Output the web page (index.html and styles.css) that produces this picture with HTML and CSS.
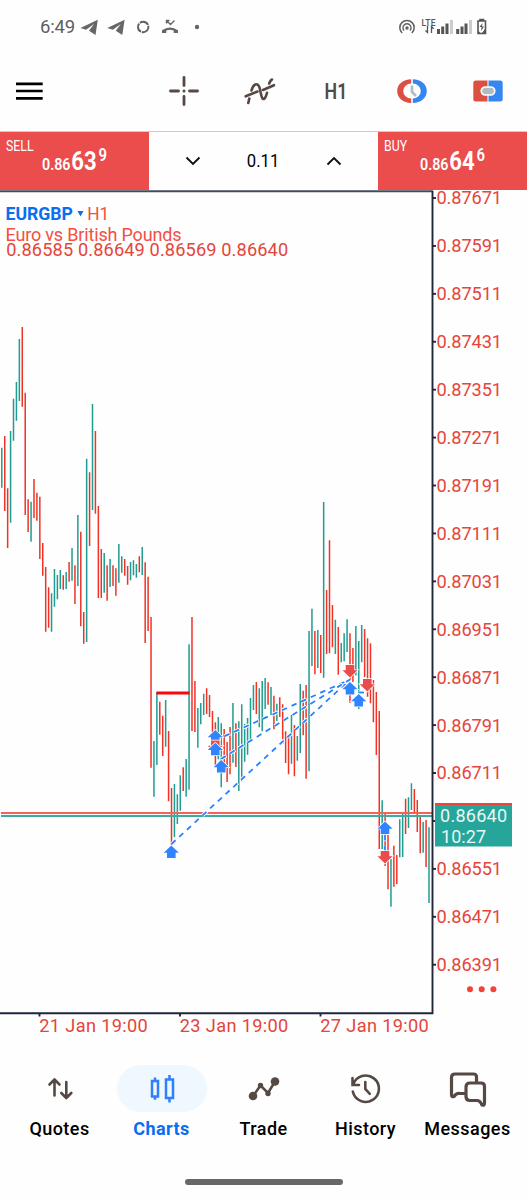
FILE: index.html
```html
<!DOCTYPE html>
<html lang="en">
<head>
    <meta charset="UTF-8">
    <meta name="viewport" content="width=device-width, initial-scale=1.0">
    <title>EURGBP H1</title>
    <link rel="stylesheet" href="styles.css">
</head>
<body>
    <div class="app">
        <!-- Status bar -->
        <div class="status-bar">
            <span class="clock">6:49</span>
            <svg class="status-left" width="124" height="22" viewBox="0 0 124 22">
                <path d="M.500 12L17.800 3.700 15.500 19 9 14.800 14 8 6 13.800z" fill="#666"/>
                <path d="M27.300 12L44.600 3.700 42.300 19 35.800 14.800 40.800 8 32.800 13.800z" fill="#666"/>
                <circle cx="63.200" cy="11" r="5.200" fill="none" stroke="#606060" stroke-width="1.900" stroke-dasharray="9.300 .9"/>
                <path d="M82 17v-2.700q8-5.800 16 0V17h-4.300v-2.600q-3.700-1.500-7.400 0V17z" fill="#666"/>
                <path d="M86.500 7.500v-3h3M87 5l3.500 3.500L94.500 4.500" fill="none" stroke="#666" stroke-width="1.400"/>
                <circle cx="117" cy="11" r="2.200" fill="#666"/>
            </svg>
            <svg class="status-right" width="92" height="22" viewBox="0 0 92 22">
                <g fill="none" stroke="#606060" stroke-width="1.500">
                    <path d="M4.200 17a7.200 7.200 0 1 1 9.600 0"/>
                    <path d="M6 14.500a4 4 0 1 1 6 0"/>
                </g>
                <circle cx="9" cy="12" r="1.700" fill="#606060"/>
                <text class="lte" x="23.500" y="10" textLength="14">LTE</text>
                <path d="M29.500 10v6.500l-2-2M33.500 17v-6.500l2.200 2.200" fill="none" stroke="#555" stroke-width="1.300"/>
                <path d="M39 13h3v5h-3zM43.200 10.500h3V18h-3zM47.500 7.500h3V18h-3zM58.200 13h3v5h-3zM62.500 10.500h3V18h-3zM66.500 7.500h3V18h-3z" fill="#555"/>
                <path d="M52 4h3v14h-3zM71 4h3v14h-3z" fill="#ccc"/>
                <path d="M80 5h7.500v12.500H80zM82 5V3.500h3.500V5" fill="none" stroke="#555" stroke-width="1.600"/>
                <path d="M84.500 7l-3 4h2l-.5 4 3-4.500h-2z" fill="#555"/>
                <path d="M80 14.500l3 3h-3zM87 13v4h-3z" fill="#555"/>
            </svg>
        </div>

        <!-- Toolbar -->
        <div class="toolbar">
            <svg class="menu" width="27" height="20" viewBox="0 0 27 20">
                <path d="M0 2.800h26.700M0 10h26.700M0 17.300h26.700" stroke="#000" stroke-width="2.700"/>
            </svg>
            <div class="tools">
                <div class="tool">
                    <svg width="30" height="30" viewBox="0 0 30 30">
                        <path d="M15 1.500v8M15 20.500v8M1.500 15h8M20.500 15h8" stroke="#564943" stroke-width="2.800" stroke-linecap="round"/>
                        <circle cx="15" cy="15" r="1.500" fill="#564943"/>
                    </svg>
                </div>
                <div class="tool">
                    <svg width="32" height="30" viewBox="0 0 32 30">
                        <g fill="none" stroke="#564943" stroke-width="2.600" stroke-linecap="round">
                            <path d="M4.300 27l1-4.500M7.500 14.500C9 8.500 13.500 5.500 15.500 11.500 17 17 17.500 24.500 20.300 22.800 22 21.500 22.500 18.500 23 16.800M25.200 7.500q1-3 2.800-4M1.700 20.300l11.800-4.800M19 14l11-4.800"/>
                        </g>
                    </svg>
                </div>
                <div class="tool period">H1</div>
                <div class="tool">
                    <svg width="30" height="26" viewBox="0 0 30 26">
                        <path d="M14.200 1.200C6 1.500.200 6 .200 13s5.800 11.700 14 12v-4.500a8 7.500 0 0 1 0-15z" fill="#dc5042"/>
                        <path d="M15.800 1.200C24 1.500 29.800 6 29.800 13s-5.800 11.700-14 12v-4.500a8 7.500 0 0 0 0-15z" fill="#3487f0"/>
                        <path d="M15 7.500v6.500l4 4" fill="none" stroke="#aebbc3" stroke-width="2.600"/>
                    </svg>
                </div>
                <div class="tool">
                    <svg width="30" height="22" viewBox="0 0 30 22">
                        <path d="M14.500.500H3Q.300.500.300 3v16Q.300 21.500 3 21.500h11.500z" fill="#dc5042"/>
                        <path d="M15.500.500H27q2.700 0 2.700 2.500v16q0 2.500-2.700 2.500H15.500z" fill="#3487f0"/>
                        <rect x="8.300" y="7" width="13.400" height="8" rx="4" fill="#aebbc3" stroke="#fff" stroke-width="1.700"/>
                    </svg>
                </div>
            </div>
        </div>

        <!-- One click trading -->
        <div class="trade-panel">
            <div class="deal">
                <span class="deal-label">SELL</span>
                <span class="deal-price">0.86<b>63</b><sup>9</sup></span>
            </div>
            <div class="volume">
                <svg width="16" height="10" viewBox="0 0 16 10"><path d="M1.500 1.500L8 8l6.500-6.500" fill="none" stroke="#111" stroke-width="1.900"/></svg>
                <span class="lots">0.11</span>
                <svg width="16" height="10" viewBox="0 0 16 10"><path d="M1.500 8.500L8 2l6.500 6.500" fill="none" stroke="#111" stroke-width="1.900"/></svg>
            </div>
            <div class="deal">
                <span class="deal-label">BUY</span>
                <span class="deal-price">0.86<b>64</b><sup>6</sup></span>
            </div>
        </div>

        <!-- Chart, y coordinates start at 190 -->
        <svg class="chart" width="527" height="860" viewBox="0 190 527 860">
            <g id="bars"></g>
            <path class="down-line" d="M1 813h431"/>
            <path class="up-line" d="M1 816h431"/>
            <path class="level" d="M156.500 693h33"/>

            <g id="deals"></g>

            <path class="frame-top" d="M0 191.200h433"/>
            <path class="frame" d="M432.500 191v822.300H0M39.500 1013v3.500M180 1013v3.500M320.500 1013v3.500"/>
            <g id="scale"></g>

            <path d="M435 803h77v43.500h-77z" fill="#26a69a"/>
            <path d="M435 803h77v2.200h-77z" fill="#f44336"/>
            <text class="tag" x="440" y="822" textLength="67">0.86640</text>
            <text class="tag" x="441" y="842.500" textLength="45">10:27</text>

            <g class="axis-text">
                <text x="39.300" y="1032" textLength="108.500">21 Jan 19:00</text>
                <text x="179.800" y="1032" textLength="108.500">23 Jan 19:00</text>
                <text x="320.300" y="1032" textLength="108.500">27 Jan 19:00</text>
            </g>
            <g fill="#f44336">
                <circle cx="470" cy="989.300" r="3"/>
                <circle cx="481.700" cy="989.300" r="3"/>
                <circle cx="493.400" cy="989.300" r="3"/>
            </g>

            <text class="symbol" x="5.500" y="219.600" textLength="67.500" lengthAdjust="spacingAndGlyphs">EURGBP</text>
            <path d="M77.500 211h6l-3 5.500z" fill="#0a6ef0"/>
            <text class="caption" x="87.300" y="219.600" textLength="22" lengthAdjust="spacingAndGlyphs">H1</text>
            <text class="caption" x="5.500" y="240.800" textLength="176">Euro vs British Pounds</text>
            <text class="axis-text" x="6.200" y="256.200" textLength="282">0.86585 0.86649 0.86569 0.86640</text>
        </svg>

        <!-- Bottom navigation -->
        <div class="nav">
            <div class="nav-item">
                <div class="nav-icon">
                    <svg width="26" height="24" viewBox="0 0 26 24"><path d="M7.500 18.500V3M2.500 7.500l5-5 5 5M19.300 5v15.500M14.300 16l5 5 5-5" fill="none" stroke="#564943" stroke-width="2.600" stroke-linecap="round" stroke-linejoin="round"/></svg>
                </div>
                <span>Quotes</span>
            </div>
            <div class="nav-item active">
                <div class="nav-icon">
                    <svg width="26" height="30" viewBox="0 0 26 30"><path d="M3 7h6v15.500H3zM6 3.500V7M6 22.500v3.200M17 5.500h7V24h-7zM20.500 1v4.500M20.500 24v4.500" fill="none" stroke="#2f80ff" stroke-width="2.500"/></svg>
                </div>
                <span>Charts</span>
            </div>
            <div class="nav-item">
                <div class="nav-icon">
                    <svg width="32" height="26" viewBox="0 0 32 26"><path d="M5 20L12.500 9.500 20 17l7-11.500" fill="none" stroke="#564943" stroke-width="2.500"/><g fill="#564943"><circle cx="5" cy="20" r="4.300"/><circle cx="12.500" cy="9.500" r="2.700"/><circle cx="20" cy="17.500" r="2.700"/><circle cx="27" cy="5.500" r="4.300"/></g></svg>
                </div>
                <span>Trade</span>
            </div>
            <div class="nav-item">
                <div class="nav-icon">
                    <svg width="32" height="32" viewBox="0 0 32 32"><path d="M2.800 18.500A13.200 13.200 0 1 0 3.200 11.500M2.500 5v7h6.500M15.300 9v7l4.500 4.800" fill="none" stroke="#564943" stroke-width="2.600" stroke-linecap="round"/></svg>
                </div>
                <span>History</span>
            </div>
            <div class="nav-item">
                <div class="nav-icon">
                    <svg width="36" height="34" viewBox="0 0 36 34"><path d="M26.500 10V5q0-3-3-3H5Q1.500 2 1.500 5.500v17q0 3 2.500 2 2.500-3.500 5.500-3h6M20 11h11q3.500 0 3.500 3.500V31q0 3-2.500 2-2-4.500-5-4.500h-7q-4 0-4-4V15q0-4 4-4z" fill="none" stroke="#564943" stroke-width="3.200" stroke-linejoin="round"/></svg>
                </div>
                <span>Messages</span>
            </div>
        </div>
        <div class="home-bar"></div>
    </div>

    <script src="chart.js"></script>
</body>
</html>
```
FILE: styles.css
```css
* {
    box-sizing: border-box;
    margin: 0;
    padding: 0;
}

body {
    font-family: Roboto, "Liberation Sans", sans-serif;
    background: #fefefe;
    color: #000;
}

.app {
    width: 527px;
    height: 1200px;
    display: flex;
    flex-direction: column;
    overflow: hidden;
}

svg {
    display: block;
    flex-shrink: 0;
    overflow: visible;
}

.status-bar {
    height: 54px;
    display: flex;
    align-items: center;
    padding: 0 37px 0 40px;
}

.clock {
    width: 40px;
    font-size: 18.5px;
    letter-spacing: -0.2px;
    color: #5f5f5f;
    white-space: nowrap;
}

.status-right {
    margin-left: auto;
}

.lte {
    font-size: 8.5px;
    font-weight: 500;
    fill: #555;
}

.toolbar {
    height: 77px;
    display: flex;
    align-items: center;
    padding: 0 0 4px 16px;
}

.tools {
    display: flex;
    margin-left: 103px;
}

.tool {
    width: 76px;
    height: 40px;
    display: flex;
    align-items: center;
    justify-content: center;
}

.period {
    font-size: 22.5px;
    font-weight: 600;
    color: #564943;
    transform: scaleX(0.79);
}

.trade-panel {
    height: 59px;
    display: flex;
    border-top: 1px solid #ccc;
}

.deal {
    width: 149.3px;
    background: #ea4d4c;
    color: #fff;
    padding: 6px;
}

.volume {
    flex: 1;
    display: flex;
    align-items: center;
    justify-content: space-between;
    padding: 0 36px;
    font-size: 18.5px;
}

.lots {
    transform: scaleX(0.9);
}

.deal-label,
.deal-price {
    display: block;
    transform-origin: left;
    white-space: nowrap;
}

.deal-label {
    font-size: 15px;
    line-height: 16px;
    transform: scaleX(0.82);
}

.deal-price {
    margin: -6px 0 0 36px;
    font-size: 16.8px;
    font-weight: 600;
    line-height: 26px;
    transform: scaleX(0.85);
}

.deal-price b {
    font-size: 26px;
    font-weight: 700;
    margin-left: 1px;
}

.deal-price sup {
    font-size: 17.5px;
    line-height: 0;
    vertical-align: 9px;
    margin-left: 2px;
}

.frame,
.frame-top {
    fill: none;
    stroke: #1f2739;
    stroke-width: 1.9;
}

.frame-top {
    stroke: #454b5d;
}

.bar {
    fill: none;
    stroke-width: 1.5;
}

.rise {
    stroke: #209c90;
}

.fall {
    stroke: #ef3427;
}

.down-line {
    stroke: #f0655b;
    stroke-width: 1.8;
}

.up-line {
    stroke: #40aaa0;
    stroke-width: 1.8;
}

.level {
    stroke: #fa0808;
    stroke-width: 3;
}

.link-edge {
    stroke: #fff;
    stroke-width: 3.6;
    stroke-dasharray: 6.2 4.3;
}

.link {
    stroke: #2c80ff;
    stroke-width: 1.8;
    stroke-dasharray: 5.5 5;
}

.buy,
.sell {
    stroke: #fff;
    stroke-width: 1.4;
    paint-order: stroke;
}

.buy {
    fill: #3084ff;
}

.sell {
    fill: #ea4b4b;
}

.axis-text {
    font-size: 18.2px;
    fill: #e5453a;
}

.caption {
    font-size: 18px;
    fill: #f44f43;
}

.symbol {
    font-size: 18.2px;
    font-weight: 700;
    fill: #0a6ef0;
}

.tag {
    font-size: 18px;
    fill: #e8f8f5;
}

.nav {
    display: flex;
    padding: 15px 8.5px 0;
}

.nav-item {
    width: 102px;
    display: flex;
    flex-direction: column;
    align-items: center;
    font-size: 18px;
    font-weight: 500;
    letter-spacing: 0.45px;
    line-height: 20px;
}

.nav-icon {
    width: 90px;
    height: 47px;
    border-radius: 24px;
    display: flex;
    align-items: center;
    justify-content: center;
    margin-bottom: 7px;
}

.active {
    color: #0a6ef0;
    font-weight: 700;
}

.active .nav-icon {
    background: #eff7ff;
}

.home-bar {
    width: 158px;
    height: 6px;
    border-radius: 3px;
    background: #686868;
    margin: auto auto 15px 184.5px;
}
```
FILE: chart.js
```js
// direction, high, low (chart pixels)
const bars = `g447.7-487.7 r436-511 r488.3-548 g431-522.7 g398.7-440.7 g382-420.7 g339-401 r327-406.7
r392.7-515 r499.3-532 g501.7-541.7 r479-518 r492.7-520.7 r496.7-559 r543-575.7 r567-631.7
r587.3-627.7 g593.3-631.7 g569-606.7 g575-599.3 g570-589 r575.3-589.7 g572-589 r562-581.7
g548-580.7 r565.3-604 g515-586 r531.7-626.3 r612-643.7 g458.7-642 r472.3-546 g404-510
r431-513.7 r506-598 r549-598 g553-592.7 r565.3-600.7 g559-587 r565.3-586 r568.3-595.7
g544-582.7 g556.3-572.7 r559-575.7 r566-584.7 g562-580.3 g560.3-575.3 g564-577.7 r556.3-572.3
g547-575 r562.3-643 r576.7-631 r617-767.7 g741-796.7 g692-765 r701.7-734.7 r715.7-756
g700-746.7 r731-801.3 r788-845 g784-837 g794.3-824 g775.3-810.7 r767.3-791 g759-796.7
g644.3-789.7 r617-731 r681-732 g708-747.7 g703-724.3 g693.7-715 r688.3-714 r695-717
r711-732 r722.3-765 g717-759.3 g723.3-787.3 r729-766 r742-782 r727-774.3 g703-762.7
r723.3-767 g721.3-791 g704.3-781.3 g724-761.7 g718-754.7 g698-740 g685-710 r682-714
g688.3-727.3 g681-731.3 g678-709 r682.3-704.7 g687-715 r695.7-729.3 g703.7-721 r697.3-717
r704.3-744 r731.3-763 r737-774.3 g715-763.7 r725-776.3 g736-760.7 g684-753 r690.7-735.3
r685-778.7 g631-771.3 g608.7-666 r631-674.3 g630-668 r635-673 g502-677.7 r590-654
r540.3-653.3 r605-647.3 g619.7-654 r627-674.7 g643-662.3 g633.3-661.3 g619.3-652 r633.3-702.7
r648-682 g626-675.3 g641-709 g625-662.3 r629-677 r638.3-696.7 r643.3-703.3 r680-722.3
r692-755 r711-849 g800.3-849.3 r813-866 r835-889.3 g859-906.7 r845.7-886.7 r855-884
g819.3-857.3 g813-857 r798.7-834 g797.3-828 g783.3-810 r789-813 r800-832 r815.3-853.3
g822-852.7 r820-867 g827.3-903`.split(/\s+/);

const paths = { g: '', r: '' };
bars.forEach((bar, i) => {
    const [high, low] = bar.slice(1).split('-');
    paths[bar[0]] += `M${(1.8 + i * 2.926).toFixed(2)} ${high}V${low}`;
});
document.getElementById('bars').innerHTML =
    `<path class="bar rise" d="${paths.g}"/><path class="bar fall" d="${paths.r}"/>`;

// Lines between entries and exits
const links = [
    'M171.5 844L350 679.500',
    'M215 740.500L350 679.500',
    'M221 759L350 679.500',
    'M358.500 692.500H367',
    'M385 835V851'
];
// type, x, tip y
const arrows = [
    ['buy', 171.3, 845.5], ['buy', 215.3, 730], ['sell', 215.3, 753], ['buy', 215.3, 742.7],
    ['buy', 221.2, 760], ['buy', 350, 682], ['buy', 358.7, 694], ['sell', 350, 677.5],
    ['sell', 367.3, 691.5], ['buy', 385, 821.5], ['sell', 385, 863.5]
];
document.getElementById('deals').innerHTML =
    links.map(d => `<path class="link-edge" d="${d}"/><path class="link" d="${d}"/>`).join('') +
    arrows.map(([type, x, y]) => {
        const s = type === 'buy' ? 1 : -1;
        return `<path class="${type}" transform="translate(${x} ${y}) scale(1 ${s})" d="M0 0L7.600 7.200H4.300V12.600H-4.300V7.200H-7.600z"/>`;
    }).join('');

// Price scale
let scale = '';
for (let i = 0; i < 17; i++) {
    const y = 198 + i * 47.92;
    scale += `<path class="frame" d="M433 ${y}h3"/>`;
    if (i !== 13) {
        const price = ((87671 - i * 80) / 100000).toFixed(5);
        scale += `<text class="axis-text" x="436.500" y="${y + 6.4}" textLength="65.500">${price}</text>`;
    }
}
document.getElementById('scale').innerHTML = scale;
```
